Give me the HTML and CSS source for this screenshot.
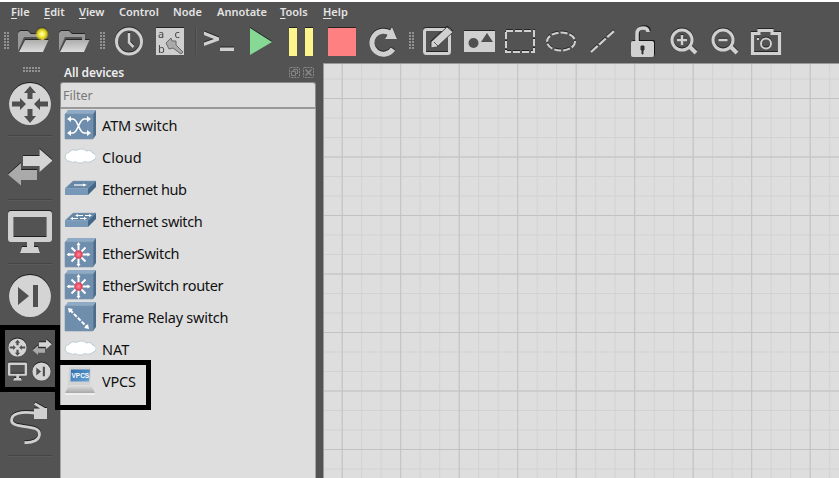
FILE: index.html
```html
<!DOCTYPE html>
<html lang="en">
<head>
<meta charset="utf-8">
<title>Network topology editor</title>
<link rel="stylesheet" href="styles.css">
</head>
<body>
<svg class="defs" width="0" height="0">
  <defs>
    <linearGradient id="silver" x1="0" y1="0" x2="0" y2="1"><stop offset="0" stop-color="#adadad"/><stop offset="1" stop-color="#dcdcdc"/></linearGradient>
    <linearGradient id="lid" x1="0" y1="0" x2="0" y2="1"><stop offset="0" stop-color="#e2e2e2"/><stop offset="1" stop-color="#a8a8a8"/></linearGradient>
    <radialGradient id="sun"><stop offset="0" stop-color="#ffffd0"/><stop offset=".4" stop-color="#f5ec3a"/><stop offset=".7" stop-color="#dccf24" stop-opacity=".9"/><stop offset="1" stop-color="#c0b020" stop-opacity="0"/></radialGradient>
    <radialGradient id="red"><stop offset="0" stop-color="#ff8a9a"/><stop offset="1" stop-color="#dc3350"/></radialGradient>
    <linearGradient id="screen" x1="0" y1="0" x2="1" y2="1"><stop offset="0" stop-color="#2f6fae"/><stop offset="1" stop-color="#6ba5d6"/></linearGradient>
    <symbol id="folder" viewBox="0 0 33 33"><path d="M1 26V8l2-2h8l3 3h13v6h-3v-3H7z" fill="#999"/><path d="M8 15h23.500l-5.500 12H2z" fill="url(#silver)"/></symbol>
    <symbol id="router" viewBox="0 0 44 44"><circle cx="22" cy="22" r="21" fill="#d4d4d4"/><g fill="#4f4f4f"><path d="M22 4l6 7h-3.500v6h-5v-6H16zM22 41l6-7h-3.500v-7h-5v7H16z"/><path d="M18 22l-6-6v3.500H4v5h8V28zM26 22l6-6v3.500h8v5h-8V28z"/></g></symbol>
    <symbol id="switch" viewBox="0 0 44 44"><path d="M29 34H13v5.500L0 28.500 13 17v7h16z" fill="#aaa"/><path d="M15 10h16.500V3L44.500 14.500 31.500 26v-6H15z" fill="#d4d4d4"/></symbol>
    <symbol id="monitor" viewBox="0 0 44 44"><path fill-rule="evenodd" d="M3 1h38q3 0 3 3v25q0 3-3 3H26v5h4l2 6H12l2-6h5v-5H3q-3 0-3-3V4q0-3 3-3zM5.500 7v20h33V7z" fill="#d0d0d0"/></symbol>
    <symbol id="security" viewBox="0 0 44 44"><circle cx="22" cy="22" r="21" fill="#d4d4d4"/><path d="M10 13l11 9-11 9zM25 11h5v22h-5z" fill="#505050"/></symbol>
    <symbol id="block" viewBox="0 0 32 32"><path d="M1 5l3-4h28l-3 4z" fill="#8faac4"/><path d="M29 5l3-4v25l-3 4z" fill="#4d6d8d"/><path d="M1 5h28v25H1z" fill="#6f8dac" stroke="#7893ad" stroke-width=".6"/></symbol>
    <symbol id="slab" viewBox="0 0 32 32"><path d="M1 15.500L9 8h23l-8 7.500z" fill="#6787a6" stroke="#84a0bb" stroke-width=".5"/><path d="M24 15.500L32 8v6l-8 8z" fill="#456887"/><path d="M1 15.500h23V22H1z" fill="#7898b7"/></symbol>
    <symbol id="cloud" viewBox="0 0 32 32"><path d="M7 20.500C-.5 20.500-.5 12.500 5.500 11c1-2.500 5.500-2.500 7-1.500 3-2 8-2 9.500.5 4-1 6 0 6.500 2 5 1 4.500 6.500 0 7.500-1.500 2-6 2-8 1-3 2.500-7 1.500-9 0-2 1.500-4 1-4.500 0z" fill="#fff" stroke="#a9c4c8" stroke-width=".8"/></symbol>
    <symbol id="star" viewBox="0 0 32 32"><use href="#block"/><g stroke="#fff" stroke-width="2"><path d="M14.500 7v21M4 17.500h21M7.500 10.500l14 14M21.500 10.500l-14 14"/></g><path d="M14.500 5l2 3h-4zM14.500 30l2-3h-4zM2.500 17.500l3-2v4zM26.500 17.500l-3-2v4z" fill="#fff"/><circle cx="14.500" cy="17.500" r="4.200" fill="url(#red)"/></symbol>
  </defs>
</svg>
<nav class="menu">
  <span class="m1"><u>F</u>ile</span><span class="m2"><u>E</u>dit</span><span class="m3"><u>V</u>iew</span><span class="m4">Control</span><span class="m5">Node</span><span class="m6">Annotate</span><span class="m7"><u>T</u>ools</span><span class="m8"><u>H</u>elp</span>
</nav>
<div class="toolbar">
  <i class="grip first"><b></b></i>
  <svg viewBox="0 0 33 33"><use href="#folder"/><circle cx="25" cy="9" r="7" fill="url(#sun)"/></svg>
  <svg viewBox="0 0 33 33"><use href="#folder"/></svg>
  <i class="grip"><b></b></i>
  <svg viewBox="0 0 33 33"><circle cx="16" cy="16.500" r="12.500" fill="none" stroke="#d0d0d0" stroke-width="3"/><path d="M16 8v9.500l4.500 4.500" fill="none" stroke="#d0d0d0" stroke-width="2.500"/></svg>
  <svg viewBox="0 0 33 33"><path d="M2 3h28v27H2z" fill="#cfcfcf"/><g class="abc"><text x="4" y="13">a</text><text x="20.500" y="13">c</text><text x="4" y="27.500">b</text></g><path d="M12 18l5-5 1 3h4v4l7 7-2 2-8-6-4 1z" fill="#aaa" stroke="#606060" stroke-width=".9"/></svg>
  <i class="sep"></i>
  <svg viewBox="0 0 33 33"><path d="M1 6.500l15 6v3L1 21v-3.500l10-3.500L1 10zM17 22.500h14V26H17z" fill="#d0d0d0"/></svg>
  <svg viewBox="0 0 33 33"><path d="M6 3l22 14L6 30z" fill="#86d995"/></svg>
  <svg viewBox="0 0 33 33"><path d="M4 3h8v28H4zM20 3h8v28h-8z" fill="#fcf58c"/></svg>
  <svg viewBox="0 0 33 33"><path d="M2 3h28v28H2z" fill="#ff8080"/></svg>
  <svg viewBox="0 0 33 33"><path d="M26 24a11.500 11.500 0 1 1-2-15" fill="none" stroke="#d0d0d0" stroke-width="5"/><path d="M25 2l5 12H18z" fill="#d0d0d0"/></svg>
  <i class="grip last"><b></b></i>
  <svg viewBox="0 0 33 33"><rect x="3.500" y="4.500" width="25" height="24" rx="2" fill="none" stroke="#d0d0d0" stroke-width="3"/><path d="M10 17L26 2l6 5-16 15-6 1z" fill="#d0d0d0" stroke="#494949"/><path d="M13 17l4 4" stroke="#555"/></svg>
  <svg viewBox="0 0 33 33"><path d="M2 6h31v21H2z" fill="#d0d0d0"/><circle cx="11.500" cy="18" r="5" fill="#505050"/><path d="M25 8l6 9H19z" fill="#505050"/></svg>
  <svg viewBox="0 0 33 33"><rect x="3" y="6" width="28" height="21" fill="none" stroke="#d0d0d0" stroke-width="2" stroke-dasharray="7 2"/></svg>
  <svg viewBox="0 0 33 33"><ellipse cx="17" cy="16.500" rx="14" ry="9" fill="none" stroke="#d0d0d0" stroke-width="2" stroke-dasharray="7 2"/></svg>
  <svg viewBox="0 0 33 33"><path d="M6 27L29 6" stroke="#d0d0d0" stroke-width="2.200" stroke-dasharray="9 2"/></svg>
  <svg class="lock" viewBox="0 0 33 33"><path d="M11 17V9q0-6 6-6 5 0 5 4" fill="none" stroke="#d0d0d0" stroke-width="3.500"/><rect x="5" y="16" width="23" height="16" rx="2" fill="#d0d0d0"/><path d="M15 21h3v4h-1v4h-1v-4h-1z" fill="#333" stroke="#333"/></svg>
  <svg viewBox="0 0 33 33"><g fill="none" stroke="#d0d0d0"><circle cx="15" cy="15" r="10" stroke-width="3"/><path d="M22 21l7 7" stroke-width="4"/><path d="M10 15h10M15 10v10" stroke-width="2.400"/></g></svg>
  <svg viewBox="0 0 33 33"><g fill="none" stroke="#d0d0d0"><circle cx="15" cy="15" r="10" stroke-width="3"/><path d="M22 21l7 7" stroke-width="4"/><path d="M10.500 15h9" stroke-width="2.400"/></g></svg>
  <svg viewBox="0 0 33 33"><path d="M3.500 8.500H10v-3h13v3h7.500v20h-27z" fill="none" stroke="#d0d0d0" stroke-width="3.200"/><circle cx="17" cy="18.500" r="5" fill="none" stroke="#d0d0d0" stroke-width="2"/><path d="M8 13h2v2H8z" fill="#d0d0d0"/></svg>
</div>
<main>
  <aside class="kinds">
    <i class="hgrip"></i>
    <div><svg viewBox="0 0 44 44"><use href="#router"/></svg></div>
    <div><svg viewBox="0 0 44 44"><use href="#switch"/></svg></div>
    <div><svg viewBox="0 0 44 44"><use href="#monitor"/></svg></div>
    <div><svg viewBox="0 0 44 44"><use href="#security"/></svg></div>
    <div><svg viewBox="0 0 44 44"><use href="#router" x="0" y="0" width="19" height="19"/><use href="#switch" x="24" y="0" width="20" height="19"/><use href="#monitor" x="0" y="24" width="19" height="19"/><use href="#security" x="24" y="24" width="19" height="19"/></svg></div>
    <div><svg viewBox="0 0 44 44"><path d="M27 11C12 9 3.500 12 3.500 18c0 10 28 3 28 14 0 6-7 9-15 8.500" fill="none" stroke="#d0d0d0" stroke-width="2.800"/><path d="M26 6.500h6l-6-4 1.500-2L37 6h2v11H26z" fill="#d0d0d0"/></svg></div>
  </aside>
  <section class="dock">
    <header><span>All devices</span>
      <svg class="float" viewBox="0 0 11 11"><rect x=".5" y=".5" width="10" height="10" rx="1" fill="none" stroke="#8b8b8b" stroke-dasharray="2 1"/><path d="M2.500 4.500h4v4h-4zM4.500 4V2.500h4v4H7" fill="none" stroke="#929292" stroke-width=".8"/></svg>
      <svg viewBox="0 0 11 11"><rect x=".5" y=".5" width="10" height="10" rx="1" fill="none" stroke="#8b8b8b" stroke-dasharray="2 1"/><path d="M2.500 2.500l6 6M8.500 2.500l-6 6" stroke="#888" stroke-width="1.500"/></svg>
    </header>
    <input placeholder="Filter">
    <ul>
      <li><svg viewBox="0 0 32 32"><use href="#block"/><path d="M5 10h4c5 0 6 14 11 14h4M5 24h4c5 0 6-14 11-14h4" fill="none" stroke="#fff" stroke-width="1.700"/><path d="M3 10l4-3v6zM3 24l4-3v6zM27 10l-4-3v6zM27 24l-4-3v6z" fill="#fff"/></svg><span class="n1">ATM switch</span></li>
      <li><svg viewBox="0 0 32 32"><use href="#cloud"/></svg><span>Cloud</span></li>
      <li><svg viewBox="0 0 32 32"><use href="#slab"/><path d="M10 12h11" stroke="#fff" stroke-width="1.200"/><path d="M23 12l-4-1.500v3z" fill="#fff"/></svg><span class="n3">Ethernet hub</span></li>
      <li><svg viewBox="0 0 32 32"><use href="#slab"/><path d="M13 10.500h6M8 13.500h6M21 10.500h5M16 13.500h6" stroke="#fff" stroke-width="1"/><path d="M11 10.500l3-1.500v3zM6 13.500l3-1.500v3zM28 10.500l-3-1.500v3zM23 13.500l-3-1.500v3z" fill="#fff"/></svg><span class="n4">Ethernet switch</span></li>
      <li><svg viewBox="0 0 32 32"><use href="#star"/></svg><span class="n5">EtherSwitch</span></li>
      <li><svg viewBox="0 0 32 32"><use href="#star"/></svg><span class="n6">EtherSwitch router</span></li>
      <li><svg viewBox="0 0 32 32"><use href="#block"/><path d="M6 9l17 17" stroke="#fff" stroke-width="2" stroke-dasharray="4 1.500"/><path d="M4 7l5 1-4 4zM25 28l-5-1 4-4z" fill="#fff"/></svg><span class="n7">Frame Relay switch</span></li>
      <li><svg viewBox="0 0 32 32"><use href="#cloud"/></svg><span>NAT</span></li>
      <li><svg viewBox="0 0 32 32"><path d="M5 2h22l-1 19H4z" fill="#d2d2d2"/><path d="M7 4.500h19l-1 12H6.500z" fill="url(#screen)"/><text class="vpcs" x="7.500" y="13">VPCS</text><path d="M5 20h22l4 8H1z" fill="url(#lid)"/><path d="M1 28h30v2H1z" fill="#eee"/></svg><span class="n9">VPCS</span></li>
    </ul>
  </section>
  <div class="canvas"><svg width="516" height="415">
    <defs>
      <pattern id="minor" x="17.700" y="14.500" width="19.500" height="19.500" patternUnits="userSpaceOnUse"><path d="M0 .5h19.500M.5 0v19.500" stroke="#d2d2d2"/></pattern>
      <pattern id="major" x="17.700" y="34" width="58.500" height="58.500" patternUnits="userSpaceOnUse"><path d="M0 .5h58.500M.5 0v58.500" stroke="#c2c2c2"/></pattern>
    </defs>
    <path fill="url(#minor)" d="M0 0h516v415H0z"/><path fill="url(#major)" d="M0 0h516v415H0z"/>
  </svg></div>
</main>
<div class="mark mark-kind"></div>
<div class="mark mark-device"></div>
</body>
</html>
```
FILE: styles.css
```css
* { box-sizing: border-box; }
body { margin: 0; width: 839px; height: 478px; overflow: hidden; position: relative; display: flex; flex-direction: column; background: #535353; border-top: 2px solid #fff; font-family: "Noto Sans", "Open Sans", sans-serif; }
svg { display: block; flex: none; }
.defs { position: absolute; }
.menu { height: 19px; display: flex; padding-left: 11px; color: #e4e4e4; font-weight: 600; font-size: 11px; line-height: 20px; white-space: nowrap; flex: none; }
.menu span { flex: none; }
.menu u { text-underline-offset: 2px; text-decoration-skip-ink: none; }
.m1 { width: 33px; } .m2 { width: 35px; } .m3 { width: 40px; } .m4 { width: 54px; }
.m5 { width: 44px; } .m6 { width: 63px; } .m7 { width: 43px; }
.toolbar { height: 42px; flex: none; display: flex; align-items: center; padding-bottom: 2px; }
.toolbar > svg { width: 33px; height: 33px; margin: 0 4px; overflow: visible; filter: drop-shadow(0 -1px 0 #252525); }
.toolbar > .lock { filter: drop-shadow(1px -1px 0 #151515); }
.grip { width: 14px; height: 18px; flex: none; display: flex; justify-content: center; }
.grip.first { width: 13px; }
.grip.last { width: 13px; padding-left: 2px; }
.grip b { width: 5px; background: repeating-linear-gradient(#0000 0 2px, #535353 2px 3px), linear-gradient(90deg, #929292 2px, #535353 2px 3px, #929292 3px); }
.sep { width: 8px; height: 28px; flex: none; background: linear-gradient(90deg, #0000 4px, #484848 4px 5px, #5c5c5c 5px 6px, #0000 6px); }
.abc { font: 11px "Noto Sans", sans-serif; fill: #444; }
main { flex: 1; min-height: 0; display: flex; }
.kinds { width: 60px; flex: none; display: flex; flex-direction: column; align-items: center; }
.hgrip { width: 18px; height: 5px; margin: 4px 0 0 3px; flex: none; background: repeating-linear-gradient(90deg, #0000 0 2px, #535353 2px 3px), linear-gradient(#929292 2px, #535353 2px 3px, #929292 3px); }
.kinds div { width: 44px; height: 64px; flex: none; padding-top: 10px; border-bottom: 1px solid #454545; box-shadow: 0 1px #5b5b5b; }
.kinds div > svg { width: 44px; height: 44px; overflow: visible; filter: drop-shadow(0 -1px 0 #202020); }
.dock { width: 256px; flex: none; display: flex; flex-direction: column; }
header { height: 19px; flex: none; display: flex; align-items: center; padding: 0 2px 0 4px; gap: 3px; color: #ededed; font-size: 12px; font-weight: 600; letter-spacing: -.1px; }
header svg { width: 11px; height: 11px; }
.float { margin-left: auto; }
input { height: 27px; width: 256px; flex: none; margin: 0; border: 1px solid #8a8a8a; border-bottom: 2px solid #999; border-radius: 3px 3px 0 0; background: #dedede; padding: 0 2px; font: 12.500px "Noto Sans", sans-serif; color: #777; }
input::placeholder { color: #777; opacity: 1; }
ul { flex: 1; min-height: 0; list-style: none; margin: 0; padding: 0 0 0 3px; background: #dedede; border: solid #a5a5a5; border-width: 0 1px; }
li { height: 32px; display: flex; align-items: center; gap: 6px; color: #111; font-size: 14.500px; white-space: nowrap; }
li svg { width: 32px; height: 32px; }
.n1 { letter-spacing: -.1px; } .n3 { letter-spacing: -.4px; } .n4 { letter-spacing: -.36px; }
.n5 { letter-spacing: -.32px; } .n6 { letter-spacing: -.34px; } .n7 { letter-spacing: -.23px; } .n9 { letter-spacing: -.2px; }
.vpcs { font: bold 6.500px "Liberation Sans", sans-serif; fill: #fff; }
.canvas { flex: 1; margin-left: 7px; background: #dedede; border: solid #999; border-width: 1px 0 0 1px; overflow: hidden; }
.mark { position: absolute; border: 5px solid #000; }
.mark-kind { left: 0; top: 323px; width: 60px; height: 67px; }
.mark-device { left: 55px; top: 358px; width: 96px; height: 50px; }
```
